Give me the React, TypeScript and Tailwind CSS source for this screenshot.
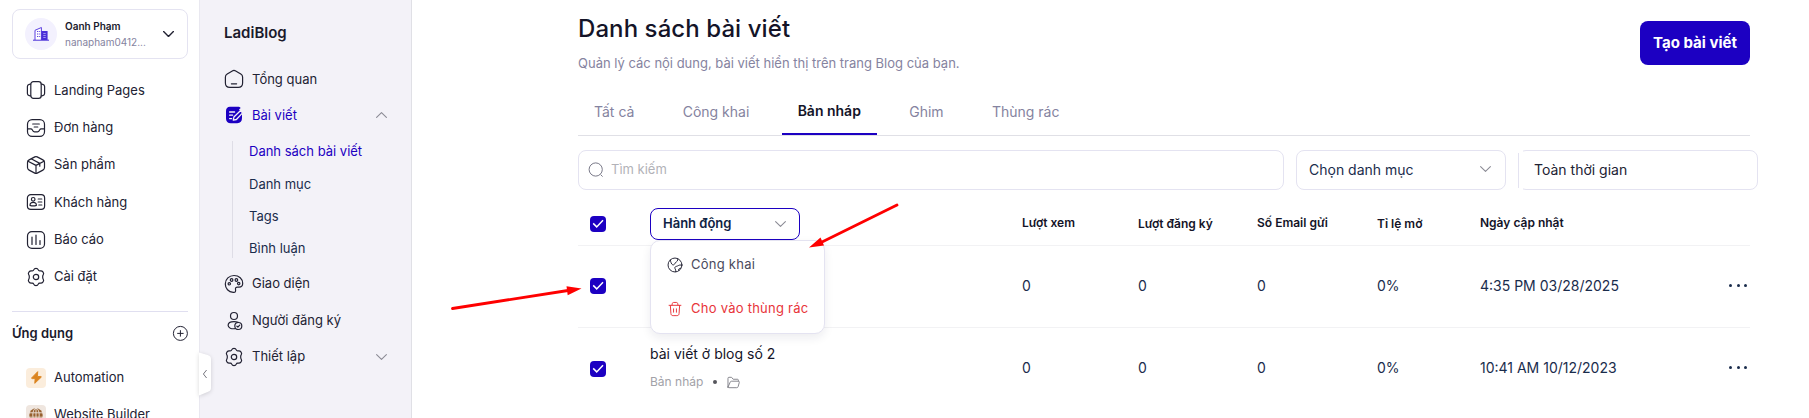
import React from "react";

type IconProps = { className?: string };

function Stroke({ className = "size-5", children }: { className?: string; children: React.ReactNode }) {
  return (
    <svg
      viewBox="0 0 20 20"
      fill="none"
      stroke="currentColor"
      strokeWidth="1.2"
      strokeLinecap="round"
      strokeLinejoin="round"
      className={"shrink-0 " + className}
    >
      {children}
    </svg>
  );
}

const LandingIcon = () => (
  <Stroke>
    <rect x="4.8" y="1.6" width="10.4" height="16.8" rx="2.6" />
    <path d="M4.8 4 3.2 4.4C2 4.7 1.4 5.4 1.4 6.6v6.8c0 1.2.6 1.9 1.8 2.2l1.6.4M15.2 4l1.6.4c1.2.3 1.8 1 1.8 2.2v6.8c0 1.2-.6 1.9-1.8 2.2l-1.6.4" />
  </Stroke>
);
const OrderIcon = () => (
  <Stroke>
    <rect x="1.5" y="1.6" width="17" height="16.8" rx="4.6" />
    <path d="M1.6 10.8h3.2c.7 0 1.2.4 1.5 1l.5.9c.4.8 1 1.1 1.8 1.1h2.8c.8 0 1.4-.3 1.8-1.1l.5-.9c.3-.6.8-1 1.5-1h3.2M6.7 6h6.6M8.2 9h3.6" />
  </Stroke>
);
const BoxIcon = () => (
  <Stroke>
    <path d="M8.8 1.9 3.1 4.9C2 5.5 1.5 6.3 1.5 7.5v5c0 1.2.5 2 1.6 2.6l5.7 3c.8.4 1.6.4 2.4 0l5.7-3c1.1-.6 1.6-1.4 1.6-2.6v-5c0-1.2-.5-2-1.6-2.6l-5.7-3c-.8-.4-1.6-.4-2.4 0Z" />
    <path d="m2 6.2 8 4.2 8-4.2M10 10.4v8M5.6 4l8.2 4.4v2.8" />
  </Stroke>
);
const CustomerIcon = () => (
  <Stroke>
    <rect x="1.4" y="2.6" width="17.2" height="14.8" rx="3.4" />
    <circle cx="7.2" cy="7.3" r="1.8" />
    <path d="M4 13.4c0-2 1.3-3 3.2-3s3.2 1 3.2 3c-2 .7-4.4.7-6.4 0ZM12.2 7h3.6M12.2 10h3.6M12.8 13h3" />
  </Stroke>
);
const ReportIcon = () => (
  <Stroke>
    <rect x="1.5" y="1.6" width="17" height="16.8" rx="4.4" />
    <path d="M6 7v7.4M10 5.2v9.2M14 10.6v3.8" />
  </Stroke>
);
const GearIcon = ({ className }: IconProps) => (
  <Stroke className={className}>
    <circle cx="10" cy="10" r="2.7" />
    <path d="M7.7 2.9C8.1 1.9 8.9 1.4 10 1.4s1.9.5 2.3 1.5c.3.9 1 1.2 1.9 1 1.1-.2 2 0 2.7.9.8 1 1 2 .4 2.9-.7.9-.6 1.3-.6 2.3s-.1 1.4.6 2.3c.6.9.4 1.9-.4 2.9-.7.9-1.6 1.1-2.7.9-.9-.2-1.6.1-1.9 1-.4 1-1.2 1.5-2.3 1.5s-1.9-.5-2.3-1.5c-.3-.9-1-1.2-1.9-1-1.1.2-2 0-2.7-.9-.8-1-1-2-.4-2.9.7-.9.6-1.3.6-2.3s.1-1.4-.6-2.3c-.6-.9-.4-1.9.4-2.9.7-.9 1.6-1.1 2.7-.9.9.2 1.6-.1 1.9-1Z" />
  </Stroke>
);
const HomeIcon = () => (
  <Stroke>
    <path d="M8.3 1.9 3.2 5C2.1 5.7 1.4 6.7 1.4 8v6c0 2.8 1.7 4.4 4.4 4.4h8.4c2.7 0 4.4-1.6 4.4-4.4V8c0-1.3-.7-2.3-1.8-3l-5.1-3.1c-1.1-.7-2.3-.7-3.4 0ZM7.4 14.8h5.2" />
  </Stroke>
);
const PostIcon = () => (
  <svg viewBox="0 0 20 20" fill="none" className="size-5 shrink-0">
    <path d="M6 1.8h7.6c1.6 0 2.5.4 3.1 1.2L15 4.6l3 3v5.4c0 3.3-1.5 5.2-4.8 5.2H6.8c-3 0-4.8-1.7-4.8-4.7V6c0-2.6 1.4-4.2 4-4.2Z" fill="#1c00c2" />
    <path d="M5.6 7h5M5.6 10.2h3M5.6 13.6h2" stroke="#f3f2f8" strokeWidth="1.3" strokeLinecap="round" />
    <path d="m9.3 15.2.6-3.2 6.5-6.3 2.2 2.2-6.2 6.6-3.1.7Z" fill="#1c00c2" stroke="#f3f2f8" strokeWidth="1.3" strokeLinejoin="round" />
  </svg>
);
const PaletteIcon = () => (
  <Stroke>
    <path d="M10 1.5c5 0 8.7 3.3 8.7 7.8 0 2.4-1.4 3.8-3.6 3.8h-1.6c-1.5 0-2.2.9-2 2.2.2 1.2.3 1.5-.1 2.3-.4.7-1 .9-2.2.8C4.5 18 1.3 14.5 1.3 9.9 1.3 5.2 5.2 1.5 10 1.5Z" />
    <circle cx="7.6" cy="6" r="1.3" />
    <circle cx="12.4" cy="6" r="1.3" />
    <circle cx="5.3" cy="9.8" r="1.2" />
    <circle cx="14.7" cy="9.6" r="1.2" />
  </Stroke>
);
const SubscriberIcon = () => (
  <Stroke>
    <circle cx="10" cy="5" r="3.5" />
    <path d="M11.4 17.6c-4 .6-7.3-.6-7.3-3.3 0-2.4 2.6-3.7 5.9-3.7 1.6 0 3 .3 4.1.8" />
    <circle cx="14.3" cy="15" r="3.5" />
    <path d="m12.9 15.2 1 .9 1.8-2" />
  </Stroke>
);

function Chevron({ up = false, className = "w-[11px] text-[#8b8b95]", width = 1.1 }: { up?: boolean; className?: string; width?: number }) {
  return (
    <svg viewBox="0 0 11 6" fill="none" stroke="currentColor" strokeWidth={width} strokeLinecap="round" strokeLinejoin="round" className={"h-1.5 shrink-0 " + className}>
      <path d={up ? "M.6 5.4 5.5.6l4.9 4.8" : "M.6.6l4.9 4.8L10.4.6"} />
    </svg>
  );
}

function Checkbox() {
  return (
    <span className="flex size-4 items-center justify-center rounded-[4px] bg-[#1c00c2]">
      <svg viewBox="0 0 12 10" fill="none" stroke="#fff" strokeWidth="1.5" className="h-[10px] w-3">
        <path d="M1.2 4.4 4.7 7.9 11 1.3" />
      </svg>
    </span>
  );
}

const mainNav = [
  { label: "Landing Pages", icon: <LandingIcon /> },
  { label: "Đơn hàng", icon: <OrderIcon /> },
  { label: "Sản phẩm", icon: <BoxIcon /> },
  { label: "Khách hàng", icon: <CustomerIcon /> },
  { label: "Báo cáo", icon: <ReportIcon /> },
  { label: "Cài đặt", icon: <GearIcon /> },
];

function MainSidebar() {
  return (
    <aside className="h-full w-[200px] shrink-0 border-r border-[#e9e8f0] bg-white pl-3 pr-[11px] pt-[9px]">
      <div className="flex h-[50px] w-44 items-center rounded-lg border border-[#e4e3f1] pl-3 pr-[13px]">
        <div className="flex size-8 items-center justify-center rounded-full bg-[#f3f1fe]">
          <svg viewBox="0 0 16 16" className="size-4">
            <path d="M2 14V4.3L8.4 1.5V14" fill="#fff" stroke="#5b3fe0" strokeWidth="1" />
            <path d="M4 5.5h1.3M4 8h1.3M4 10.5h1.3M6.2 5.5h1M6.2 8h1M6.2 10.5h1" stroke="#5b3fe0" strokeWidth="1" />
            <path d="M8.4 5h6.2v9H8.4z" fill="#4a2fd8" />
            <path d="M10.3 7.5h2.4M10.3 9.5h2.4M10.3 11.5h2.4" stroke="#b9adf5" strokeWidth=".8" />
            <path d="M0 14.2h16" stroke="#4a2fd8" strokeWidth="1" />
          </svg>
        </div>
        <div className="ml-2 w-[86px]">
          <div className="text-[10px] font-semibold leading-4 text-[#1a1a2c]">Oanh Phạm</div>
          <div className="text-[10px] leading-4 text-[#8583a0]">nanapham0412...</div>
        </div>
        <Chevron className="ml-auto w-[11px] text-[#222233]" width={1.4} />
      </div>
      <nav className="mt-[12.6px] flex flex-col">
        {mainNav.map((item) => (
          <a key={item.label} className="flex h-[37.4px] items-center gap-2 pl-[14px] text-[13px] text-[#222233]">
            {item.icon}
            {item.label}
          </a>
        ))}
      </nav>
      <div className="mt-[15.4px] h-px bg-[#e0dff0]" />
      <div className="mt-[10px] flex h-[22px] items-center justify-between">
        <span className="text-[13px] font-semibold text-[#1a1a2c]">Ứng dụng</span>
        <svg viewBox="0 0 16 16" fill="none" stroke="#222233" strokeWidth="1" className="size-4">
          <circle cx="8.4" cy="8.4" r="7" />
          <path d="M8.4 5.2v6.4M5.2 8.4h6.4" />
        </svg>
      </div>
      <div className="mt-[23.6px] flex flex-col gap-[17px] pl-[14px] text-[13px] text-[#222233]">
        <a className="flex h-5 items-center gap-2">
          <span className="flex size-5 items-center justify-center rounded-[4px] bg-[#fbeddc]">
            <svg viewBox="0 0 12 14" className="h-[13px] w-[11px]">
              <path d="M7.3.6.9 7.3c-.4.5-.2.9.4.9h3.2l-.4 5.2 6.9-6.6c.4-.5.2-.9-.4-.9H7.1L7.3.6Z" fill="#db8420" stroke="#db8420" strokeLinejoin="round" />
            </svg>
          </span>
          Automation
        </a>
        <a className="flex h-5 items-center gap-2 whitespace-nowrap">
          <span className="flex size-5 items-center justify-center rounded-[4px] bg-[#efe6df]">
            <svg viewBox="0 0 14 14" fill="none" className="size-[14px]">
              <circle cx="7" cy="7" r="6.7" fill="#96602f" />
              <path d="M.3 4.8h13.4M.3 9.2h13.4M7 .3v13.4" stroke="#efe6df" strokeWidth=".9" />
              <ellipse cx="7" cy="7" rx="3.2" ry="6.7" stroke="#efe6df" strokeWidth=".9" />
            </svg>
          </span>
          Website Builder
        </a>
      </div>
    </aside>
  );
}

function BlogSidebar() {
  return (
    <aside className="relative h-full w-[212px] shrink-0 border-r border-[#e0e0e6] bg-[#f3f2f8] text-[13px] text-[#222233]">
      <div className="pl-6 pt-[21px] text-[15px] font-semibold leading-6 text-[#1a1a2c]">LadiBlog</div>
      <nav className="mt-[16.4px]">
        <a className="flex h-9 items-center gap-2 pl-6">
          <HomeIcon />
          Tổng quan
        </a>
        <a className="flex h-9 items-center gap-2 pl-6 pr-6 text-[#1c00c2]">
          <PostIcon />
          Bài viết
          <Chevron up className="ml-auto w-[11px] text-[#8b8b95]" />
        </a>
        <div className="ml-8 mt-[7.6px] flex h-[117px] flex-col border-l border-[#dedde6] pl-4 text-[#1a2c4c]">
          <a className="-mt-[5px] flex h-8 shrink-0 items-center text-[#1c00c2]">Danh sách bài viết</a>
          <a className="flex h-[33px] shrink-0 items-center">Danh mục</a>
          <a className="flex h-8 shrink-0 items-center">Tags</a>
          <a className="flex h-8 shrink-0 items-center">Bình luận</a>
        </div>
        <div className="mt-2">
          <a className="flex h-[36.5px] items-center gap-2 pl-6">
            <PaletteIcon />
            Giao diện
          </a>
          <a className="flex h-[36.5px] items-center gap-2 pl-6">
            <SubscriberIcon />
            Người đăng ký
          </a>
          <a className="flex h-[36.5px] items-center gap-2 pl-6 pr-6">
            <GearIcon />
            Thiết lập
            <Chevron className="ml-auto w-[11px] text-[#8b8b95]" />
          </a>
        </div>
      </nav>
      <svg viewBox="0 0 13 46" className="absolute -left-px top-[351px] h-[46px] w-[13px] overflow-visible">
        <path d="M0 1.5 8.5 4C11 4.8 12 6 12 8v29c0 2-1 3.2-3.5 4L0 44.5Z" fill="#fff" className="drop-shadow-sm" />
        <path d="M7.6 19 4.4 23l3.2 4" fill="none" stroke="#77777f" strokeWidth="1" />
      </svg>
    </aside>
  );
}

const tabs = ["Tất cả", "Công khai", "Bản nháp", "Ghim", "Thùng rác"];
const rows = [
  { title: "", date: "4:35 PM 03/28/2025" },
  { title: "bài viết ở blog số 2", date: "10:41 AM 10/12/2023" },
];

function ActionMenu() {
  return (
    <div className="absolute left-0 top-8 z-10 h-[94px] w-[175px] rounded-[10px] border border-[#e4e3f1] bg-white pl-4 pt-[9px] text-[13px] font-normal tracking-[0.25px] shadow-[0_4px_10px_rgba(20,20,60,0.08)]">
      <div className="flex h-[30px] items-center gap-2 text-[#4a4a5c]">
        <Stroke className="size-4 text-[#222233]">
          <circle cx="10" cy="10" r="8.7" />
          <path d="M4.2 3.8c.3 2 1.2 5.4 3 6 1.600.5 2.400-1 3-2.400.6-1.300 2.300-1 2.800-2.400.3-.9.200-1.900.3-3M18.400 10.200c-1.600-.4-3.200-.2-4.400.6-1.400 1-3.800.8-4.200 2.400-.3 1.500 1.400 1.600 1.200 5.200M14.800 17c-1-1.200-.4-2.700 2.500-3.200" />
        </Stroke>
        Công khai
      </div>
      <div className="mt-[14px] flex h-[30px] items-center gap-2 whitespace-nowrap text-[#e8343a]">
        <Stroke className="size-4">
          <path d="M2.6 5.4h14.8M6.2 5.2l.5-2.2c.2-.8.7-1.2 1.5-1.2h3.6c.8 0 1.3.4 1.5 1.2l.5 2.2M4.2 5.6l.7 10c.1 1.8 1 2.7 2.8 2.7h4.6c1.8 0 2.7-.9 2.8-2.7l.7-10M8.2 9.8v4.2M11.8 9.8v4.2" />
        </Stroke>
        Cho vào thùng rác
      </div>
    </div>
  );
}

const columns = "grid grid-cols-[72px_372px_116px_119px_120px_103px_1fr]";

function Main() {
  return (
    <main className="relative flex-1 pl-[166px]">
      <div className="w-[1172px]">
        <header className="flex h-[72px] items-start justify-between">
          <div className="pt-[13px]">
            <h1 className="text-[24px] font-medium leading-8 tracking-[0.08px] text-[#141428]">Danh sách bài viết</h1>
            <p className="mt-2 text-[13px] leading-5 text-[#8583a0]">Quản lý các nội dung, bài viết hiển thị trên trang Blog của bạn.</p>
          </div>
          <button className="mt-[21px] h-11 w-[110px] whitespace-nowrap rounded-lg bg-[#1c00c2] text-[15px] font-bold text-white">Tạo bài viết</button>
        </header>
        <div className="mt-[15px] flex h-[49px] gap-[16.3px] border-b border-[#e0e0e6]">
          {tabs.map((tab) => (
            <div
              key={tab}
              className={
                tab === "Bản nháp"
                  ? "flex items-center border-b-2 border-[#1c00c2] px-4 text-[14px] font-semibold text-[#141428]"
                  : "flex items-center border-b-2 border-transparent px-4 pt-0.5 text-[14px] text-[#8583a0]"
              }
            >
              {tab}
            </div>
          ))}
        </div>
        <div className="mt-[14px] flex h-10 w-[1180px] gap-3 text-[14px] text-[#1a2c4c]">
          <div className="flex w-[706px] items-center gap-[7px] rounded-lg border border-[#e4e3f1] pl-[9px] text-[13px] text-[#b2b2b8]">
            <svg viewBox="0 0 16 16" fill="none" stroke="#6b6b7c" strokeWidth=".9" className="size-4">
              <circle cx="7.7" cy="7.5" r="6.6" />
              <path d="m12.6 12.6 2 2" />
            </svg>
            Tìm kiếm
          </div>
          <div className="flex w-[210px] items-center justify-between rounded-lg border border-[#e4e3f1] pb-px pl-3 pr-[14px]">
            Chọn danh mục
            <Chevron className="-mt-0.5 w-[11px] text-[#8b8b95]" />
          </div>
          <div className="relative flex w-60 items-center rounded-lg border border-[#e4e3f1] pb-px pl-[15px] text-[#222233]">
            Toàn thời gian
            <span className="absolute -left-px -top-px h-10 w-[5px] bg-white" />
            <span className="absolute -left-px top-0.5 h-[35px] w-px bg-[#e4e3f1]" />
          </div>
        </div>
        <section className="text-[#141428]">
          <div className={columns + " h-14 items-center border-b border-[#f2f2f4] pt-3 text-[12px] font-semibold"}>
            <div className="self-start pl-3 pt-[14px]">
              <Checkbox />
            </div>
            <div className="relative self-start pt-1.5">
              <div className="relative flex h-8 w-[150px] items-center justify-between rounded-lg border border-[#1c00c2] bg-white pl-3 pr-[13px] text-[13px] text-[#0f2344]">
                Hành động
                <Chevron />
                <div className="absolute -left-px -top-px">
                  <ActionMenu />
                </div>
              </div>
            </div>
            <div className="pb-px">Lượt xem</div>
            <div className="pt-px">Lượt đăng ký</div>
            <div className="pb-px">Số Email gửi</div>
            <div className="pt-px">Tỉ lệ mở</div>
            <div className="pb-px">Ngày cập nhật</div>
          </div>
          {rows.map((row) => (
            <div key={row.date} className={columns + " h-[82px] items-center border-b border-[#f2f2f4] text-[14px] text-[#1a2c4c] last:border-transparent"}>
              <div className={row.title ? "self-start pl-3 pt-[33px]" : "self-start pl-3 pt-8"}>
                <Checkbox />
              </div>
              <div className="pb-px">
                {row.title && (
                  <>
                    <div className="leading-5 text-[#141428]">{row.title}</div>
                    <div className="mt-2 flex h-5 items-center text-[12px] text-[#a2a2a8]">
                      Bản nháp
                      <span className="ml-2.5 size-1 rounded-full bg-[#55555c]" />
                      <Stroke className="ml-2.5 size-[13px] text-[#85858c]">
                        <path d="M1.5 17V3.5c0-1 .5-1.5 1.5-1.5h4l2.5 3H16c1 0 1.5.5 1.5 1.5V8M1.5 17 5 9.3C5.4 8.4 6 8 7 8h10.5c1.2 0 1.7.8 1.4 1.8l-1.7 6.4c-.3 1.1-1 1.8-2.2 1.8H3c-1 0-1.5-.4-1.5-1Z" strokeWidth="1.5" />
                      </Stroke>
                    </div>
                  </>
                )}
              </div>
              <div className="pb-[3px]">0</div>
              <div className="pb-[3px]">0</div>
              <div className="pb-[3px]">0</div>
              <div className="pb-[3px]">0%</div>
              <div className="flex items-center justify-between pb-[3px] pr-[3px]">
                {row.date}
                <span className="flex gap-[4.5px]">
                  <i className="size-[3px] rounded-full bg-[#1a2c4c]" />
                  <i className="size-[3px] rounded-full bg-[#1a2c4c]" />
                  <i className="size-[3px] rounded-full bg-[#1a2c4c]" />
                </span>
              </div>
            </div>
          ))}
        </section>
      </div>
      <svg viewBox="412 190 500 130" className="pointer-events-none absolute left-0 top-[190px] z-20 h-[130px] w-[500px]">
        <path d="M452.5 308.500 568 290.500M897 205l-75 37" stroke="#fe0000" strokeWidth="2.8" strokeLinecap="round" />
        <path d="m581.500 288.500-15-2.200 1.200 9ZM809 247.500l11.500-10 3.500 8Z" fill="#fe0000" />
      </svg>
    </main>
  );
}

export default function App() {
  return (
    <div className="flex h-[418px] w-[1809px] overflow-hidden bg-white font-['Inter',sans-serif]">
      <MainSidebar />
      <BlogSidebar />
      <Main />
    </div>
  );
}
